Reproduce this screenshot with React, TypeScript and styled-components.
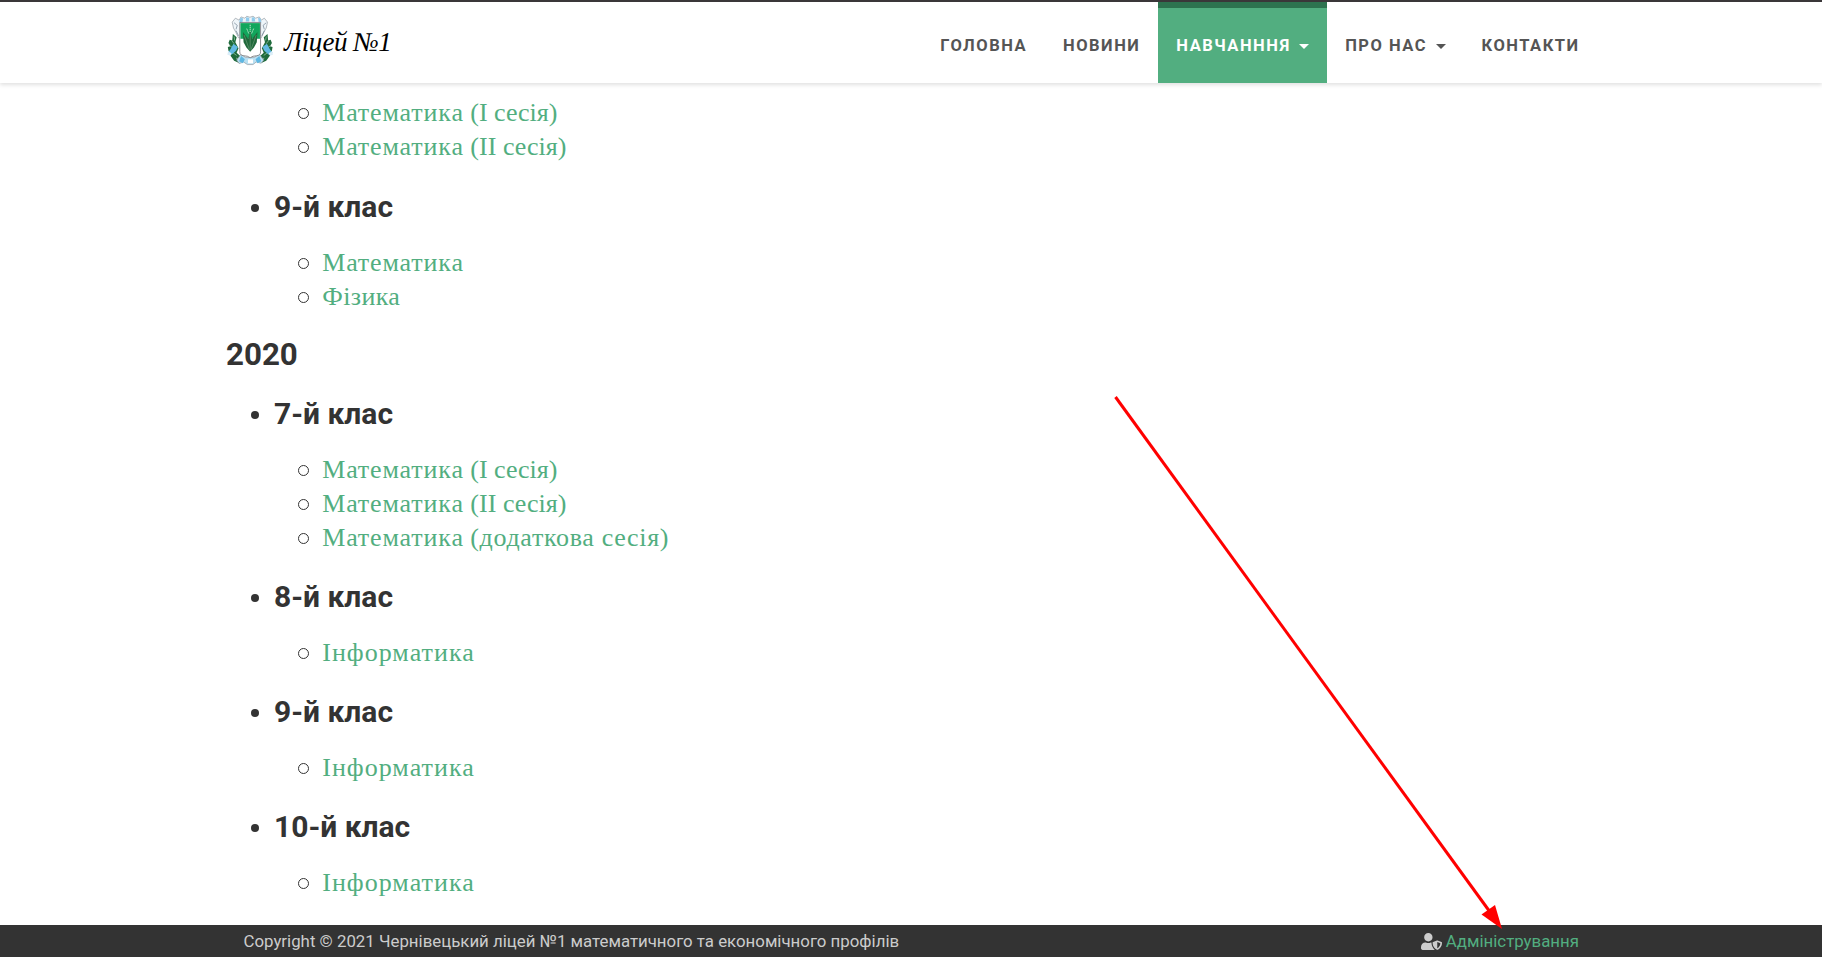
import React from 'react';
import styled, { createGlobalStyle } from 'styled-components';
import { FaUserShield } from 'react-icons/fa';

const Global = createGlobalStyle`
  * { box-sizing: border-box; }
  html, body { margin: 0; height: 100%; overflow: hidden; }
  body { background: #fff; color: #333; font-family: Roboto, sans-serif; }
  #root { height: 100%; }
  ul { margin: 0; padding: 0; list-style: none; }
`;

const Page = styled.div`
  height: 957px;
  display: flex;
  flex-direction: column;
  position: relative;
`;

const Header = styled.header`
  height: 83px;
  flex: none;
  border-top: 2px solid #3a3739;
  padding: 0 224.4px 0 224px;
  display: flex;
  justify-content: space-between;
  background: #fff;
  box-shadow: 0 2px 4px rgba(0, 0, 0, 0.12);
`;

const Brand = styled.a`
  display: flex;
  align-items: center;
  padding-bottom: 5px;
`;

const BrandName = styled.span`
  font: italic 27px/32px "Liberation Serif", serif;
  letter-spacing: -0.5px;
  color: #000;
  margin-left: 6px;
  padding-top: 4px;
  white-space: nowrap;
`;

const Nav = styled.nav`
  display: flex;
`;

const NavItem = styled.a<{ $active?: boolean }>`
  display: flex;
  align-items: center;
  padding: 0 18px;
  border-top: 6px solid ${p => (p.$active ? '#2d734f' : 'transparent')};
  background: ${p => (p.$active ? '#52ae80' : 'transparent')};
  background-clip: padding-box;
  color: ${p => (p.$active ? '#fff' : '#555')};
  font-size: 16.5px;
  font-weight: 700;
  letter-spacing: 1.5px;
  white-space: nowrap;
`;

const Caret = styled.i`
  margin: 1px 0 0 8.5px;
  border: 5px solid transparent;
  border-top-color: currentColor;
  border-bottom: 0;
`;

const Main = styled.main`
  flex: 1;
  min-height: 0;
  padding: 13px 226px 0;
`;

const YearTitle = styled.h2`
  margin: 22px 0 -2px;
  font-size: 31.3px;
  line-height: 38px;
  font-weight: 700;
`;

const ClassTitle = styled.h3`
  display: flex;
  align-items: center;
  margin: 0;
  padding: 22.5px 0 21.5px 24.7px;
  font-size: 30px;
  line-height: 37px;
  font-weight: 700;

  &::before {
    content: '';
    width: 8.4px;
    height: 8.4px;
    margin: 4px 14.9px 0 0;
    border-radius: 50%;
    background: #333;
  }
`;

const Subjects = styled.ul<{ $last?: boolean }>`
  padding-left: 72px;
  padding-bottom: ${p => (p.$last ? 1 : 0)}px;
  font-family: "Liberation Serif", serif;
  font-size: 26px;
`;

const Subject = styled.li`
  display: flex;
  align-items: center;
  height: 34px;
  line-height: 34px;

  &::before {
    content: '';
    width: 9px;
    height: 9px;
    margin: 0 13.2px 0 0;
    border: 1px solid #333;
    border-radius: 50%;
    flex: none;
  }
`;

const SubjectLink = styled.a`
  color: #52ae80;
  white-space: pre;
`;

const Word = styled.span<{ $tracking: number }>`
  letter-spacing: ${p => p.$tracking}px;
`;

const Footer = styled.footer`
  height: 32px;
  flex: none;
  background: #333;
  color: #ccc;
  padding: 0 243px 0 243.5px;
  display: flex;
  align-items: center;
  justify-content: space-between;
  font-size: 16.83px;
`;

const Admin = styled.span`
  display: flex;
  align-items: center;
  gap: 4px;
  a { color: #52ae80; }
`;

const Arrow = styled.svg`
  position: absolute;
  left: 0;
  top: 0;
  pointer-events: none;
`;

const WreathSide = () => (
  <g>
    <path d="M26 68l12 10-4 16 10 18-6 14 14 12 4 14-12 4-14-6-12-16 4-6-10-8-2-12 8-2-6-10 4-10 8 2z" fill="#1f6b3c" />
    <path d="M22 88l8 10M16 104l12 8M24 124l14 10M30 76l2 12M36 142l10 4" stroke="#7fb08c" strokeWidth="3" />
    <path d="M28 98l14 10-6 12-14 12-12-6 8-10z" fill="#62b9e3" />
    <path d="M12 122l10 5-4 8-10-4z" fill="#dceef8" />
  </g>
);

const Emblem = () => (
  <svg width="54" height="60" viewBox="0 0 162 180" fill="none">
    <g transform="translate(2 5) scale(0.945 0.98)">
      <path d="M24 32l10-12 12 6 6-10 12 4 6-6 10 3 10-3 8 6 12-4 6 10 10-6 10 12-4 18-8 14-8 16H44l-8-16-8-14z" fill="#eff5f9" stroke="#8b959d" strokeWidth="2" />
      <path d="M50 18l9 3-3 12H46zM68 17l10 2v11H67zM86 18l9-1 2 13H86zM106 19l8 2 3 12h-9z" fill="#8fcbec" />
      <path d="M30 34l10 8-4 12M132 34l-10 8 4 12M36 58l8 16M126 58l-8 16" stroke="#65798a" strokeWidth="2" />
      <WreathSide />
      <g transform="translate(162 0) scale(-1 1)"><WreathSide /></g>
      <path d="M38 148l14-18 14 10h28l16-10 14 18-8 10-16-4-10 8H72l-12-8-14 5z" fill="#b9dff1" stroke="#8b959d" strokeWidth="2" />
      <path d="M52 136l12 10-6 12-12-6zM110 136l-12 10 6 12 12-6z" fill="#5eb7e2" />
      <path d="M74 146h16v12H74z" fill="#fff" />
      <path d="M48 33h66v90q0 11-13 12-12 0-20 6-8-6-20-6-13-1-13-12z" fill="#fff" stroke="#6f7275" strokeWidth="2.500" />
      <path d="M50 35h62v48H50z" fill="#12a65c" />
      <path d="M58 62l17 22 6-28 6 28 17-22-2 32-9 16-12 13-12-13-9-16z" fill="#20683b" />
      <path d="M62 72l17 46M100 72l-17 46M81 66v48" stroke="#6c9c79" strokeWidth="2" />
      <path d="M81 40v24M70 52l7 16M92 52l-7 16" stroke="#cde9d6" strokeWidth="3" strokeDasharray="4 2" />
    </g>
  </svg>
);

type Part = [text: string, tracking: number];

const MATH: Part = ['Математика', 0.85];
const SPACE: Part = [' ', 0];
const FIRST: Part[] = [MATH, SPACE, ['(І сесія)', -0.02]];
const SECOND: Part[] = [MATH, SPACE, ['(ІІ сесія)', 0.03]];
const EXTRA: Part[] = [MATH, SPACE, ['(додаткова сесія)', 0.68]];
const PHYSICS: Part[] = [['Фізика', 0.4]];
const INFORMATICS: Part[] = [['Інформатика', 1.03]];

const Group = ({ title, items, last }: { title?: string; items: Part[][]; last?: boolean }) => (
  <li>
    {title && <ClassTitle>{title}</ClassTitle>}
    <Subjects $last={last}>
      {items.map((parts, i) => (
        <Subject key={i}>
          <SubjectLink>
            {parts.map(([text, tracking], j) => <Word key={j} $tracking={tracking}>{text}</Word>)}
          </SubjectLink>
        </Subject>
      ))}
    </Subjects>
  </li>
);

export default function App() {
  return (
    <>
      <Global />
      <Page>
        <Header>
          <Brand><Emblem /><BrandName>Ліцей №1</BrandName></Brand>
          <Nav>
            <NavItem>ГОЛОВНА</NavItem>
            <NavItem>НОВИНИ</NavItem>
            <NavItem $active>НАВЧАНННЯ<Caret /></NavItem>
            <NavItem>ПРО НАС<Caret /></NavItem>
            <NavItem>КОНТАКТИ</NavItem>
          </Nav>
        </Header>
        <Main>
          <ul>
            <Group items={[FIRST, SECOND]} last />
            <Group title="9-й клас" items={[[MATH], PHYSICS]} />
          </ul>
          <YearTitle>2020</YearTitle>
          <ul>
            <Group title="7-й клас" items={[FIRST, SECOND, EXTRA]} />
            <Group title="8-й клас" items={[INFORMATICS]} />
            <Group title="9-й клас" items={[INFORMATICS]} />
            <Group title="10-й клас" items={[INFORMATICS]} />
          </ul>
        </Main>
        <Footer>
          <span>Copyright © 2021 Чернівецький ліцей №1 математичного та економічного профілів</span>
          <Admin><FaUserShield size={21} /><a>Адміністрування</a></Admin>
        </Footer>
        <Arrow width="1822" height="957">
          <path d="M1115.500 397L1490 912" stroke="#f00" strokeWidth="3" />
          <path d="M1502 929L1495 905L1481.500 914.500Z" fill="#f00" />
        </Arrow>
      </Page>
    </>
  );
}
